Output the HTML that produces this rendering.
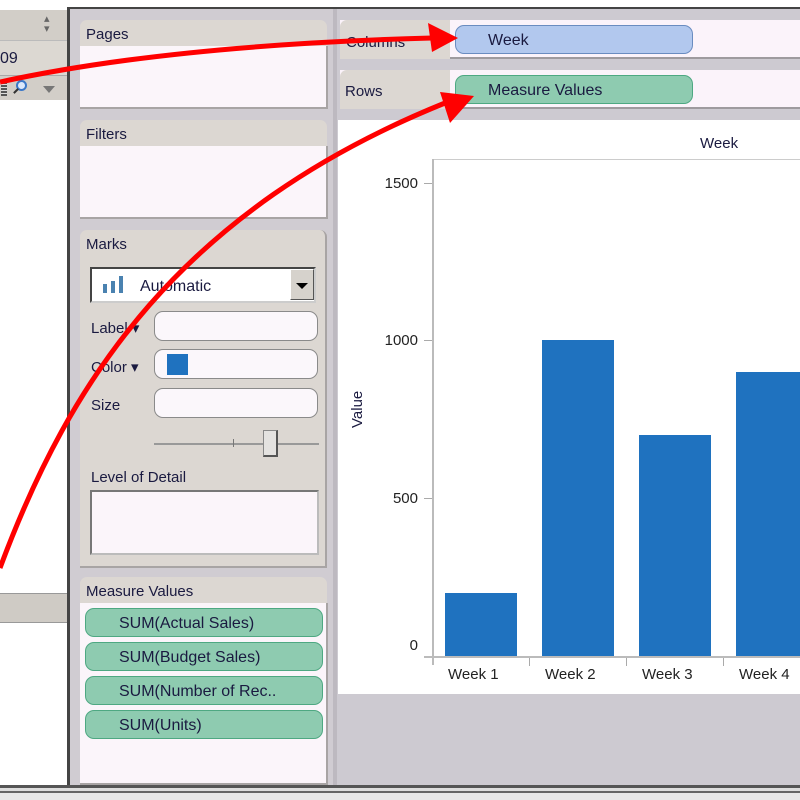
<!DOCTYPE html>
<html><head><style>
*{margin:0;padding:0;box-sizing:border-box}
body{width:800px;height:800px;overflow:hidden;background:#fff;position:relative;font-family:"Liberation Sans",Tahoma,sans-serif;font-size:15px;color:#1a1a40}
.a{position:absolute}
.hdr{position:absolute;background:#dcd7d2;border-radius:7px 7px 0 0;padding:6px 6px;font-size:15px}
.body{position:absolute;background:#fbf5fa;border-bottom:2px solid #a8a4a4;border-right:2px solid #a8a4a4}
.pill{position:absolute;border-radius:9px;font-size:16px;padding-left:30px;line-height:30px}
.g{background:#8ecbb0;border:1px solid #4ea882}
.b{background:#b2c8ee;border:1px solid #6a8cc0}
.fld{position:absolute;left:154px;width:164px;height:30px;background:#fbf7fb;border:1px solid #8a8a8a;border-radius:9px}
.lbl{position:absolute;left:91px;font-size:15px}
.tk{position:absolute;font-size:15px;color:#222;text-align:right;width:50px}
.bar{position:absolute;background:#1f72bf;width:72px}
.wk{position:absolute;font-size:15px;color:#222;top:666px}
</style></head><body>
<!-- left panel -->
<div class="a" style="left:0;top:10px;width:68px;height:30px;background:#d2cec8"></div>
<div class="a" style="left:0;top:40px;width:68px;height:35px;background:#dcd8d2;border-top:1px solid #bbb"></div>
<div class="a" style="left:0;top:50px;font-size:16px">09</div>
<div class="a" style="left:44px;top:14px;font-size:11px;color:#666;line-height:10px">▴<br>▾</div>
<div class="a" style="left:0;top:75px;width:68px;height:25px;background:#d2cec8;border-top:1px solid #aaa"></div>
<div class="a" style="left:1px;top:82px;width:6px;height:14px;background:repeating-linear-gradient(#555 0 2px,#ddd 2px 3px)"></div>
<div class="a" style="left:16px;top:80px;width:11px;height:11px;border:2px solid #3b78c8;border-radius:50%;background:#dbe8fb"></div>
<div class="a" style="left:13px;top:90px;width:6px;height:2px;background:#333;transform:rotate(-45deg)"></div>
<div class="a" style="left:43px;top:86px;width:0;height:0;border-left:6px solid transparent;border-right:6px solid transparent;border-top:7px solid #777"></div>
<div class="a" style="left:0;top:593px;width:68px;height:30px;background:#cfcbc5;border-top:1px solid #999;border-bottom:1px solid #999"></div>
<div class="a" style="left:67px;top:8px;width:3px;height:780px;background:#444"></div>
<div class="a" style="left:67px;top:7px;width:733px;height:2px;background:#444"></div>
<!-- middle -->
<div class="a" style="left:70px;top:9px;width:267px;height:777px;background:#d0ccd2"></div>
<div class="hdr" style="left:80px;top:20px;width:247px;height:26px">Pages</div>
<div class="body" style="left:80px;top:46px;width:248px;height:63px"></div>
<div class="hdr" style="left:80px;top:120px;width:247px;height:26px">Filters</div>
<div class="body" style="left:80px;top:146px;width:248px;height:73px"></div>
<div class="hdr" style="left:80px;top:230px;width:247px;height:338px;border-right:2px solid #a8a4a4;border-bottom:2px solid #a8a4a4">Marks</div>
<div class="a" style="left:90px;top:267px;width:226px;height:36px;background:#fff;border:2px solid #444;border-right-color:#ccc;border-bottom-color:#ccc"></div>
<div class="a" style="left:103px;top:284px;width:4px;height:9px;background:#4a82b0"></div>
<div class="a" style="left:111px;top:281px;width:4px;height:12px;background:#4a82b0"></div>
<div class="a" style="left:119px;top:276px;width:4px;height:17px;background:#4a82b0"></div>
<div class="a" style="left:140px;top:278px;font-size:16px">Automatic</div>
<div class="a" style="left:290px;top:269px;width:24px;height:31px;background:#d6d2cc;border:1px solid #fff;border-right-color:#555;border-bottom-color:#555"></div>
<div class="a" style="left:296px;top:283px;border-left:6px solid transparent;border-right:6px solid transparent;border-top:6px solid #000"></div>
<div class="lbl" style="top:319px">Label ▾</div>
<div class="fld" style="top:311px"></div>
<div class="lbl" style="top:358px">Color ▾</div>
<div class="fld" style="top:349px"></div>
<div class="a" style="left:167px;top:354px;width:21px;height:21px;background:#1f72bf"></div>
<div class="lbl" style="top:397px">Size</div>
<div class="fld" style="top:388px"></div>
<div class="a" style="left:154px;top:443px;width:165px;height:2px;background:#999"></div>
<div class="a" style="left:233px;top:439px;width:1px;height:8px;background:#777"></div>
<div class="a" style="left:263px;top:430px;width:15px;height:27px;background:#e4e2e0;border:1px solid #888;border-right:2px solid #555;border-bottom:2px solid #555"></div>
<div class="lbl" style="top:469px">Level of Detail</div>
<div class="a" style="left:90px;top:490px;width:229px;height:65px;background:#fbf5fa;border:2px solid #777;border-right-color:#bbb;border-bottom-color:#bbb"></div>
<div class="hdr" style="left:80px;top:577px;width:247px;height:26px">Measure Values</div>
<div class="body" style="left:80px;top:603px;width:248px;height:182px"></div>
<div class="pill g" style="left:85px;top:608px;width:238px;height:29px;line-height:30px;padding-left:33px">SUM(Actual Sales)</div>
<div class="pill g" style="left:85px;top:642px;width:238px;height:29px;line-height:30px;padding-left:33px">SUM(Budget Sales)</div>
<div class="pill g" style="left:85px;top:676px;width:238px;height:29px;line-height:30px;padding-left:33px">SUM(Number of Rec..</div>
<div class="pill g" style="left:85px;top:710px;width:238px;height:29px;line-height:30px;padding-left:33px">SUM(Units)</div>
<!-- right -->
<div class="a" style="left:333px;top:9px;width:4px;height:777px;background:#bdb9c0"></div>
<div class="a" style="left:337px;top:9px;width:463px;height:777px;background:#cdcad1"></div>
<div class="a" style="left:340px;top:20px;width:460px;height:39px;background:#fbf3fa;border-bottom:2px solid #9e9a9e"></div>
<div class="a" style="left:340px;top:20px;width:110px;height:39px;background:#dcd7d2;border-radius:7px 0 0 0;padding:14px 6px;font-size:15px">Columns</div>
<div class="pill b" style="left:455px;top:25px;width:238px;height:29px;padding-left:32px">Week</div>
<div class="a" style="left:340px;top:70px;width:460px;height:39px;background:#fbf3fa;border-bottom:2px solid #9e9a9e"></div>
<div class="a" style="left:340px;top:70px;width:110px;height:39px;background:#dcd7d2;border-radius:7px 0 0 0;padding:13px 5px;font-size:15px">Rows</div>
<div class="pill g" style="left:455px;top:75px;width:238px;height:29px;padding-left:32px">Measure Values</div>
<div class="a" style="left:338px;top:120px;width:462px;height:574px;background:#fff"></div>
<div class="a" style="left:700px;top:135px;font-size:15px">Week</div>
<div class="a" style="left:432px;top:159px;width:368px;height:1px;background:#ccc"></div>
<div class="a" style="left:432px;top:159px;width:2px;height:506px;background:#bbb"></div>
<div class="a" style="left:424px;top:656px;width:376px;height:2px;background:#bbb"></div>
<div class="a" style="left:424px;top:183px;width:8px;height:1px;background:#aaa"></div>
<div class="a" style="left:424px;top:340px;width:8px;height:1px;background:#aaa"></div>
<div class="a" style="left:424px;top:498px;width:8px;height:1px;background:#aaa"></div>
<div class="tk" style="left:368px;top:175px">1500</div>
<div class="tk" style="left:368px;top:332px">1000</div>
<div class="tk" style="left:368px;top:490px">500</div>
<div class="tk" style="left:368px;top:637px">0</div>
<div class="a" style="left:349px;top:428px;font-size:15px;transform:rotate(-90deg);transform-origin:left top">Value</div>
<div class="bar" style="left:445px;top:593px;height:63px"></div>
<div class="bar" style="left:542px;top:340px;height:316px"></div>
<div class="bar" style="left:639px;top:435px;height:221px"></div>
<div class="bar" style="left:736px;top:372px;height:284px"></div>
<div class="a" style="left:529px;top:658px;width:1px;height:8px;background:#aaa"></div>
<div class="a" style="left:626px;top:658px;width:1px;height:8px;background:#aaa"></div>
<div class="a" style="left:723px;top:658px;width:1px;height:8px;background:#aaa"></div>
<div class="wk" style="left:448px">Week 1</div>
<div class="wk" style="left:545px">Week 2</div>
<div class="wk" style="left:642px">Week 3</div>
<div class="wk" style="left:739px">Week 4</div>
<div class="a" style="left:0;top:785px;width:800px;height:3px;background:#555"></div>
<div class="a" style="left:0;top:788px;width:800px;height:3px;background:#ddd"></div>
<div class="a" style="left:0;top:791px;width:800px;height:2px;background:#666"></div>
<div class="a" style="left:0;top:793px;width:800px;height:7px;background:#e8e8e8"></div>
<svg class="a" style="left:0;top:0" width="800" height="800">
<path d="M0,82 Q170,45 432,38" stroke="#f00" stroke-width="5" fill="none"/>
<polygon points="458,38 428,23 432,52" fill="#f00"/>
<path d="M0,568 C70,380 180,210 445,103" stroke="#f00" stroke-width="5" fill="none"/>
<polygon points="474,96 440,92 450,123" fill="#f00"/>
</svg>
</body></html>
